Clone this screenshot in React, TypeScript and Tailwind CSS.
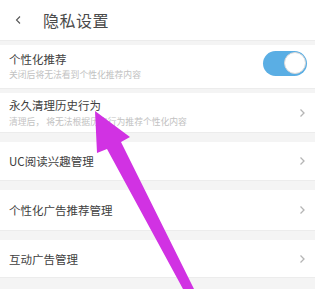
import React, { useState } from 'react';

const font = { fontFamily: '"Noto Sans CJK SC", "Noto Sans", sans-serif' };

const Chevron = () => (
  <svg width="7" height="10" viewBox="0 0 7 10" className="shrink-0">
    <path d="M1.5 1.5 L5 5 L1.5 8.5" fill="none" stroke="#b5b5b5" strokeWidth="1.3" />
  </svg>
);

const Band = ({ h }: { h: string }) => (
  <div className={`${h} mr-[8px] bg-[#f4f4f4] border-t border-[#ececec]`} />
);

const LinkRow = ({ title, sub, h }: { title: string; sub?: string; h: string }) => (
  <div className={`${h} flex items-center pl-[9px] pr-[17px] bg-white`}>
    <div className="flex-1 flex flex-col">
      <span className="text-[11.5px] leading-[14px] text-[#404040]">{title}</span>
      {sub && <span className="mt-[5px] text-[8.8px] leading-[10px] text-[#c2c2c2]">{sub}</span>}
    </div>
    <Chevron />
  </div>
);

export default function App() {
  const [on, setOn] = useState(true);

  return (
    <div className="relative w-[323px] h-[289px] overflow-hidden bg-white" style={font}>
      {/* header */}
      <div className="h-[40px] flex items-center pl-[14px]">
        <svg width="9" height="10" viewBox="0 0 9 10">
          <path d="M6 1.5 L2.5 5 L6 8.5" fill="none" stroke="#555555" strokeWidth="1.1" />
        </svg>
        <span className="ml-[20px] text-[16px] leading-[20px] text-[#4a4a4a] tracking-[0.5px]">隐私设置</span>
      </div>
      <Band h="h-[5px]" />

      {/* toggle row */}
      <div className="h-[43px] flex items-center pl-[9px] pr-[16px]">
        <div className="flex-1 flex flex-col -mt-[2px]">
          <span className="text-[11.5px] leading-[14px] text-[#404040]">个性化推荐</span>
          <span className="mt-[4px] text-[8.8px] leading-[10px] text-[#c2c2c2]">关闭后将无法看到个性化推荐内容</span>
        </div>
        <button
          onClick={() => setOn(!on)}
          className={`-mt-[7px] w-[44px] h-[25px] rounded-full flex items-center p-[1.5px] ${on ? 'bg-[#5aaee4] justify-end' : 'bg-[#dddddd] justify-start'}`}
        >
          <span className="w-[22px] h-[22px] rounded-full bg-white border border-[#d8d8d8]" />
        </button>
      </div>
      <Band h="h-[5px]" />

      <LinkRow h="h-[39px]" title="永久清理历史行为" sub="清理后， 将无法根据历史行为推荐个性化内容" />
      <Band h="h-[10px]" />
      <LinkRow h="h-[38px]" title="UC阅读兴趣管理" />
      <Band h="h-[10px]" />
      <LinkRow h="h-[40px]" title="个性化广告推荐管理" />
      <Band h="h-[10px]" />
      <LinkRow h="h-[37px]" title="互动广告管理" />
      <Band h="h-[12px]" />

      {/* annotation arrow */}
      <svg className="absolute inset-0 pointer-events-none" width="323" height="289" viewBox="0 0 323 289">
        <polygon
          points="95,111 130,137 121,142 194,289 183,289 107,149 97,153"
          fill="#d132e3"
        />
      </svg>
    </div>
  );
}
